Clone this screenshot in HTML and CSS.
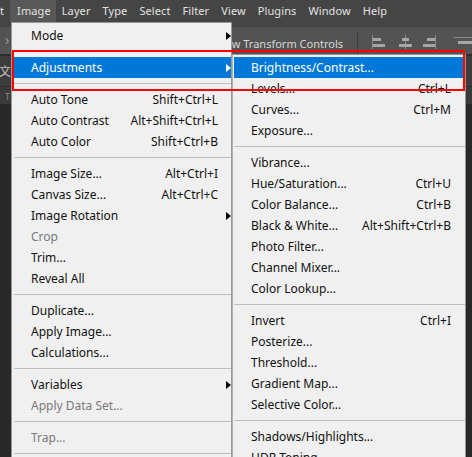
FILE: index.html
```html
<!DOCTYPE html>
<html lang="en">
<head>
    <meta charset="UTF-8">
    <meta name="viewport" content="width=device-width, initial-scale=1.0">
    <title>Image Menu</title>
    <link rel="stylesheet" href="styles.css">
</head>
<body>
    <div class="app">
        <div class="menubar">
            <span class="menubar-item first">Edit</span>
            <span class="menubar-item active">Image</span>
            <span class="menubar-item">Layer</span>
            <span class="menubar-item">Type</span>
            <span class="menubar-item">Select</span>
            <span class="menubar-item">Filter</span>
            <span class="menubar-item">View</span>
            <span class="menubar-item">Plugins</span>
            <span class="menubar-item">Window</span>
            <span class="menubar-item">Help</span>
        </div>

        <div class="options">
            <span class="chevron">&#8250;</span>
            <span class="options-label">Show Transform Controls</span>
            <span class="options-divider"></span>
            <!-- align left / center / right / top -->
            <svg class="align-icon" width="14" height="14" viewBox="0 0 14 14">
                <rect x="1" y="0" width="1" height="14" fill="#8c8c8c"/>
                <rect x="2" y="3" width="8" height="3" fill="#a6a6a6"/>
                <rect x="2" y="9" width="12" height="3" fill="#a6a6a6"/>
            </svg>
            <svg class="align-icon mid" width="14" height="14" viewBox="0 0 14 14">
                <rect x="6" y="0" width="1" height="14" fill="#8c8c8c"/>
                <rect x="3" y="3" width="7" height="3" fill="#a6a6a6"/>
                <rect x="0" y="9" width="13" height="3" fill="#a6a6a6"/>
            </svg>
            <svg class="align-icon" width="14" height="14" viewBox="0 0 14 14">
                <rect x="12" y="0" width="1" height="14" fill="#8c8c8c"/>
                <rect x="4" y="3" width="8" height="3" fill="#a6a6a6"/>
                <rect x="0" y="9" width="12" height="3" fill="#a6a6a6"/>
            </svg>
            <svg class="align-icon last" width="18" height="14" viewBox="0 0 18 14">
                <rect x="0" y="2" width="18" height="1" fill="#8c8c8c"/>
                <rect x="4" y="6" width="14" height="3" fill="#a6a6a6"/>
            </svg>
        </div>

        <div class="workspace">
            <div class="doc-tabs"><span class="doc-tab">文1</span></div>
            <div class="ruler"><span class="ruler-mark">T</span></div>
            <div class="canvas"></div>
        </div>

        <!-- Image menu -->
        <div class="menu main-menu">
            <div class="menu-item has-sub"><span class="label">Mode</span><span class="arrow"></span></div>
            <div class="menu-sep"></div>
            <div class="menu-item has-sub selected"><span class="label">Adjustments</span><span class="arrow"></span></div>
            <div class="menu-sep"></div>
            <div class="menu-item"><span class="label">Auto Tone</span><span class="key">Shift+Ctrl+L</span></div>
            <div class="menu-item"><span class="label">Auto Contrast</span><span class="key">Alt+Shift+Ctrl+L</span></div>
            <div class="menu-item"><span class="label">Auto Color</span><span class="key">Shift+Ctrl+B</span></div>
            <div class="menu-sep"></div>
            <div class="menu-item"><span class="label">Image Size...</span><span class="key">Alt+Ctrl+I</span></div>
            <div class="menu-item"><span class="label">Canvas Size...</span><span class="key">Alt+Ctrl+C</span></div>
            <div class="menu-item has-sub"><span class="label">Image Rotation</span><span class="arrow"></span></div>
            <div class="menu-item disabled"><span class="label">Crop</span></div>
            <div class="menu-item"><span class="label">Trim...</span></div>
            <div class="menu-item"><span class="label">Reveal All</span></div>
            <div class="menu-sep"></div>
            <div class="menu-item"><span class="label">Duplicate...</span></div>
            <div class="menu-item"><span class="label">Apply Image...</span></div>
            <div class="menu-item"><span class="label">Calculations...</span></div>
            <div class="menu-sep"></div>
            <div class="menu-item has-sub"><span class="label">Variables</span><span class="arrow"></span></div>
            <div class="menu-item disabled"><span class="label">Apply Data Set...</span></div>
            <div class="menu-sep"></div>
            <div class="menu-item disabled"><span class="label">Trap...</span></div>
            <div class="menu-sep"></div>
        </div>

        <!-- Adjustments submenu -->
        <div class="menu sub-menu">
            <div class="menu-item selected"><span class="label">Brightness/Contrast...</span></div>
            <div class="menu-item"><span class="label">Levels...</span><span class="key">Ctrl+L</span></div>
            <div class="menu-item"><span class="label">Curves...</span><span class="key">Ctrl+M</span></div>
            <div class="menu-item"><span class="label">Exposure...</span></div>
            <div class="menu-sep"></div>
            <div class="menu-item"><span class="label">Vibrance...</span></div>
            <div class="menu-item"><span class="label">Hue/Saturation...</span><span class="key">Ctrl+U</span></div>
            <div class="menu-item"><span class="label">Color Balance...</span><span class="key">Ctrl+B</span></div>
            <div class="menu-item"><span class="label">Black &amp; White...</span><span class="key">Alt+Shift+Ctrl+B</span></div>
            <div class="menu-item"><span class="label">Photo Filter...</span></div>
            <div class="menu-item"><span class="label">Channel Mixer...</span></div>
            <div class="menu-item"><span class="label">Color Lookup...</span></div>
            <div class="menu-sep"></div>
            <div class="menu-item"><span class="label">Invert</span><span class="key">Ctrl+I</span></div>
            <div class="menu-item"><span class="label">Posterize...</span></div>
            <div class="menu-item"><span class="label">Threshold...</span></div>
            <div class="menu-item"><span class="label">Gradient Map...</span></div>
            <div class="menu-item"><span class="label">Selective Color...</span></div>
            <div class="menu-sep"></div>
            <div class="menu-item"><span class="label">Shadows/Highlights...</span></div>
            <div class="menu-item"><span class="label">HDR Toning...</span></div>
        </div>

        <!-- annotation box -->
        <div class="callout"></div>
    </div>
</body>
</html>
```

FILE: styles.css
```css
body {
    margin: 0;
    font-family: "Noto Sans", "Noto Sans CJK SC", sans-serif;
    background-color: #282828;
    overflow: hidden;
}
.app {
    position: relative;
    width: 472px;
    height: 457px;
    display: flex;
    flex-direction: column;
    overflow: hidden;
}

/* top menu bar */
.menubar {
    height: 27px;
    background-color: #454545;
    display: flex;
    align-items: flex-start;
    flex-shrink: 0;
    white-space: nowrap;
}
.menubar-item {
    height: 22px;
    line-height: 21px;
    padding: 0 6px;
    font-size: 11px;
    letter-spacing: 0.1px;
    color: #e2e2e2;
    flex-shrink: 0;
}
.menubar-item.first {
    margin-left: -22px;
}
.menubar-item.active {
    background-color: #585858;
    padding-left: 7px;
    padding-right: 5px;
}

/* options bar */
.options {
    height: 27px;
    background-color: #535353;
    display: flex;
    align-items: flex-end;
    padding-bottom: 2px;
    box-sizing: border-box;
    flex-shrink: 0;
    color: #d8d8d8;
    font-size: 11px;
    white-space: nowrap;
}
.options > * {
    flex-shrink: 0;
}
.chevron {
    width: 14px;
    padding-left: 5px;
    font-size: 14px;
    color: #9a9a9a;
    align-self: center;
}
.options-label {
    width: 324px;
    text-align: right;
    line-height: 16px;
}
.options-divider {
    width: 1px;
    height: 22px;
    background-color: #3c3c3c;
    margin: 0 13px -2px 14px;
}
.align-icon {
    margin-right: 14px;
    margin-bottom: 3px;
}
.align-icon.mid {
    margin-right: 10px;
}
.align-icon.last {
    margin-left: 3px;
}

/* document area */
.workspace {
    flex: 1;
    display: flex;
    flex-direction: column;
}
.doc-tabs {
    height: 32px;
    background-color: #3c3c3c;
    border-top: 2px solid #2e2e2e;
    box-sizing: border-box;
    display: flex;
    align-items: center;
}
.doc-tab {
    margin-left: -1px;
    font-size: 12px;
    color: #c4c4c4;
}
.ruler {
    height: 18px;
    background-color: #3a3a3a;
    border-top: 1px solid #2c2c2c;
    box-sizing: border-box;
}
.ruler-mark {
    display: block;
    padding: 3px 0 0 5px;
    font-size: 9px;
    color: #8a8a8a;
}
.canvas {
    flex: 1;
    background-color: #282828;
}

/* dropdown menus */
.menu {
    position: absolute;
    background-color: #f0f0f0;
    border: 1px solid #979797;
    font-size: 12px;
    color: #111;
}
.main-menu {
    left: 11px;
    top: 22px;
    width: 217px;
    padding: 2px 0 2px 2px;
}
.sub-menu {
    left: 232px;
    top: 54px;
    width: 231px;
    padding: 2px 0 2px 1px;
    border-left-color: #b0b0b0;
}
.menu-item {
    height: 21px;
    display: flex;
    align-items: center;
    padding-left: 17px;
    padding-right: 13px;
    white-space: nowrap;
}
.sub-menu .menu-item {
    padding-right: 14px;
}
.menu-item.has-sub {
    padding-right: 0;
}
.menu-item .label {
    flex: 1;
}
.menu-item .key {
    margin-left: 12px;
}
.menu-item .arrow {
    width: 0;
    height: 0;
    border-left: 5px solid #000;
    border-top: 4px solid transparent;
    border-bottom: 4px solid transparent;
}
.menu-item.selected {
    background-color: #0078d7;
    color: #fff;
}
.menu-item.selected .arrow {
    border-left-color: #fff;
}
.menu-item.disabled {
    color: #7a7a7a;
}
.menu-sep {
    height: 11px;
    display: flex;
    align-items: center;
}
.menu-sep::after {
    content: "";
    flex: 1;
    height: 1px;
    background-color: #bdbdbd;
}

/* red annotation */
.callout {
    position: absolute;
    left: 12px;
    top: 50px;
    width: 449px;
    height: 37px;
    border: 2px solid #f00;
}
```
